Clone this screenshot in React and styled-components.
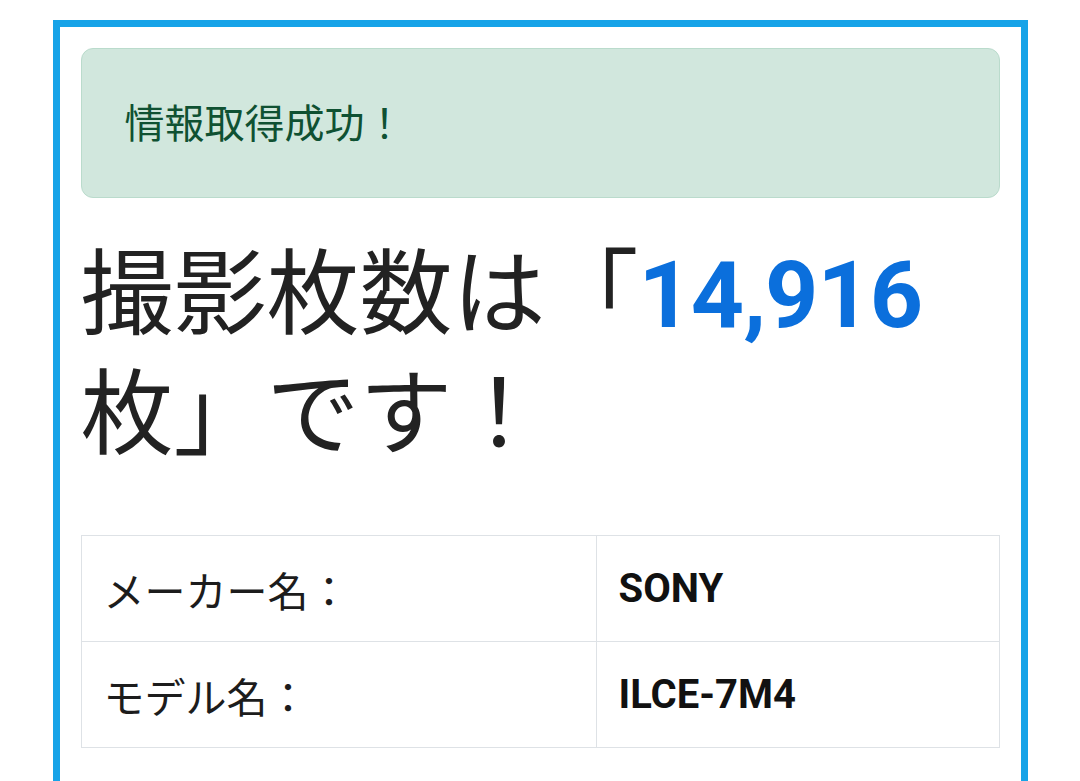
import React from 'react';
import styled, { createGlobalStyle } from 'styled-components';

const GlobalStyle = createGlobalStyle`
  html, body {
    margin: 0;
    padding: 0;
    background: #fff;
  }
  body {
    padding-top: 20px;
    font-family: "Roboto", "Noto Sans CJK JP", sans-serif;
    color: #212529;
  }
`;

const Frame = styled.div`
  box-sizing: border-box;
  width: 975px;
  margin: 0 auto;
  border: 7px solid #17a3e8;
  border-bottom: none;
  padding: 21px 21px 40px;
`;

const Alert = styled.div`
  box-sizing: border-box;
  display: flex;
  align-items: center;
  height: 150px;
  padding: 0 43px 4px;
  background: #d1e7dd;
  border: 1px solid #badbcc;
  border-radius: 12px;
  color: #0f5132;
  font-size: 40px;
`;

const Heading = styled.h1`
  margin: 38px 0 0;
  font-size: 93px;
  line-height: 120px;
  font-weight: 400;
  color: #222;
`;

const Count = styled.span`
  color: #0b6fdc;
  font-weight: 700;
  letter-spacing: -1px;
`;

const InfoTable = styled.table`
  width: 100%;
  margin-top: 59px;
  border-collapse: collapse;
`;

const Row = styled.tr`
  height: 106px;
`;

const Cell = styled.td`
  box-sizing: border-box;
  border: 1px solid #dee2e6;
  padding: 0 22px;
  width: ${(p) => (p.$label ? '515px' : 'auto')};
  font-size: ${(p) => (p.$label ? '41px' : '40px')};
  font-weight: ${(p) => (p.$label ? 400 : 700)};
  color: ${(p) => (p.$label ? '#1c1c1c' : '#111')};
`;

const info = [
  { label: 'メーカー名：', value: 'SONY' },
  { label: 'モデル名：', value: 'ILCE-7M4' },
];

export default function App() {
  return (
    <>
      <GlobalStyle />
      <Frame>
        <Alert>情報取得成功！</Alert>
        <Heading>
          撮影枚数は「<Count>14,916</Count>枚」です！
        </Heading>
        <InfoTable>
          <tbody>
            {info.map((row) => (
              <Row key={row.label}>
                <Cell $label>{row.label}</Cell>
                <Cell>{row.value}</Cell>
              </Row>
            ))}
          </tbody>
        </InfoTable>
      </Frame>
    </>
  );
}
